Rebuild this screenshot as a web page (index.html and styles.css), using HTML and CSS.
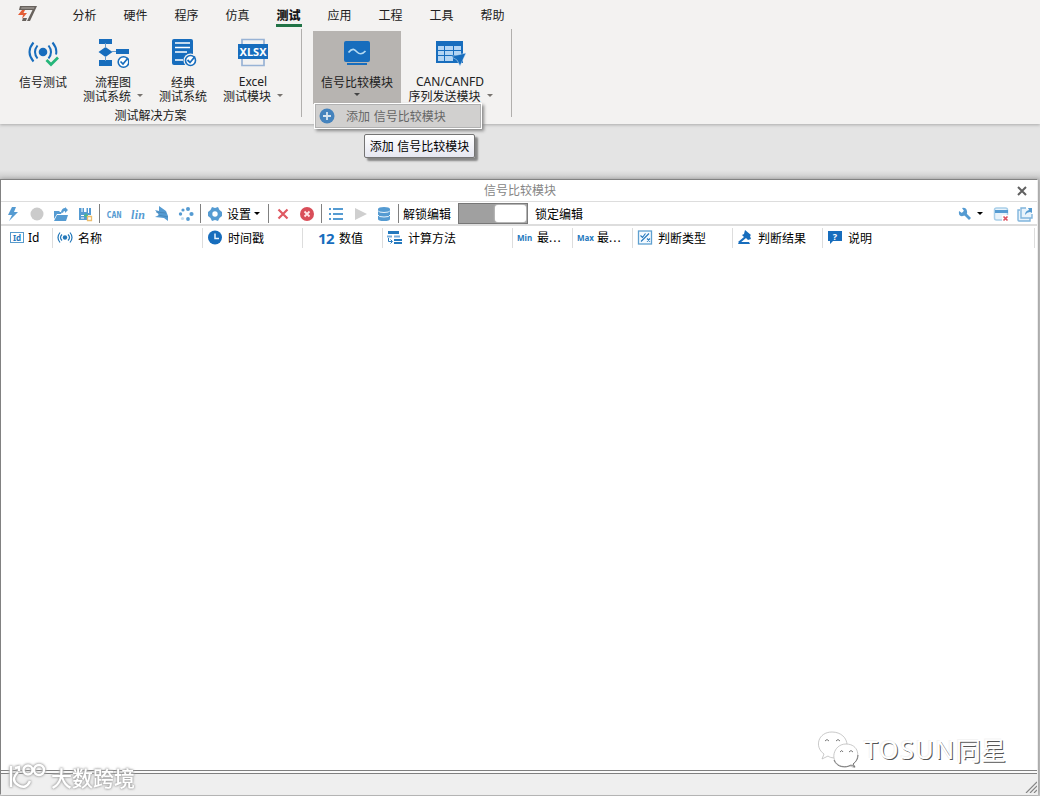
FILE: index.html
```html
<!DOCTYPE html>
<html lang="zh-CN">
<head>
<meta charset="utf-8">
<title>信号比较模块</title>
<link rel="stylesheet" href="styles.css">
</head>
<body>
<div class="app">
  <header class="ribbon">
    <nav class="tabs">
      <svg class="logo" width="20" height="18" viewBox="0 0 20 18"><path fill="#68625d" d="M2 0h17l-7 15H9l5.500-11H1z"/><path fill="#b5b0ac" d="M3.500 1.500h13l-.5 1H3z"/><path fill="#e45d36" d="M4 4h3L5.500 7H9l-5 6 1-4H0z"/><path fill="#68625d" d="M5 12h4l-1 3H4z"/></svg>
      <span class="tab">分析</span><span class="tab">硬件</span><span class="tab">程序</span><span class="tab">仿真</span><span class="tab active"><b>测试</b></span><span class="tab">应用</span><span class="tab">工程</span><span class="tab">工具</span><span class="tab">帮助</span>
    </nav>
    <div class="groups">
      <section class="group solutions">
        <div class="buttons">
          <div class="btn b1">
            <svg width="32" height="32" viewBox="0 0 32 32"><circle cx="16" cy="15" r="4.300" fill="#176dbd"/><g fill="none" stroke="#176dbd" stroke-width="2"><path d="M10.500 8.500q-5 6.500 0 13M6.500 5.500q-8 9.500 0 19M21.500 8.500q5 6.500 0 13M25.500 5.500q5 6 3.500 12"/></g><path d="M19.500 23l4.500 4.500 7-7" fill="none" stroke="#25b67a" stroke-width="2.800"/></svg>
            <span>信号测试</span>
          </div>
          <div class="btn b2">
            <svg width="32" height="32" viewBox="0 0 32 32"><g fill="#176dbd"><path d="M2 2h13v5H2zM2 23h13v6H2zM19 12h13v5H19zM8.500 10l7 5-7 5-7-5z"/></g><path d="M8.500 6v5M8.500 19v5M15 14.500h4" stroke="#669cce"/><circle cx="26.500" cy="25" r="5.300" fill="#fff" stroke="#176dbd" stroke-width="1.600"/><path d="M23.500 24.500l2.500 2.500 5-6" fill="none" stroke="#176dbd" stroke-width="1.700"/></svg>
            <span>流程图</span><span class="line">测试系统<i class="caret"></i></span>
          </div>
          <div class="btn b3">
            <svg width="32" height="32" viewBox="0 0 32 32"><path d="M7 2h17q2 0 2 2v24H7q-2 0-2-2V4q0-2 2-2z" fill="#176dbd"/><path d="M8 6h15M8 10.500h15M8 15h12M8 23h8" stroke="#fff" stroke-width="1.500"/><circle cx="23.500" cy="23.500" r="7" fill="#f2f1f0"/><circle cx="23.500" cy="23.500" r="5" fill="#fff" stroke="#176dbd" stroke-width="1.600"/><path d="M20.500 23l2.500 2.500 5-6" fill="none" stroke="#176dbd" stroke-width="1.800"/></svg>
            <span>经典</span><span>测试系统</span>
          </div>
          <div class="btn b4">
            <svg width="32" height="32" viewBox="0 0 32 32"><path d="M5 8V2.500h22V8M5 21v7.500h22V21" fill="none" stroke="#98b3d5" stroke-width="1.700"/><path d="M1 7h30v15H1z" fill="#176dbd"/><text x="16" y="18.500" text-anchor="middle" class="xlsx" textLength="27">XLSX</text></svg>
            <span class="latin">Excel</span><span class="line">测试模块<i class="caret"></i></span>
          </div>
        </div>
        <div class="group-name">测试解决方案</div>
      </section>
      <section class="group modules">
        <div class="btn compare">
          <svg width="32" height="32" viewBox="0 0 32 32"><path d="M5 4h22q2 0 2 2v17q0 2-2 2H5q-2 0-2-2V6q0-2 2-2zM6 26h20v2H6z" fill="#176dbd"/><path d="M7.500 15.500C12 10 14 13 16 15s5 3 8.500-1" fill="none" stroke="#b4daf2" stroke-width="1.700"/></svg>
          <span>信号比较模块</span><i class="caret dark"></i>
          <div class="menu"><svg width="16" height="16" viewBox="0 0 16 16"><circle cx="8" cy="8" r="7.500" fill="#4583bd"/><path d="M8 4v8M4 8h8" stroke="#d9e5ef" stroke-width="1.800"/></svg><span>添加 信号比较模块</span></div>
          <div class="tooltip">添加 信号比较模块</div>
        </div>
        <div class="btn sequence">
          <svg width="32" height="32" viewBox="0 0 32 32"><path d="M2 4h27v22H2z" fill="#176dbd"/><path d="M4 9h6v4H4zM11 9h8v4h-8zM20 9h7v4h-7zM4 14h6v4H4zM11 14h8v4h-8zM20 14h7v4h-7zM4 19h6v5H4zM11 19h8v5h-8z" fill="#b4d5f3"/><path d="M17 19.500L32 16l-6 13-3-6z" fill="#176dbd" stroke="#d9eafa" stroke-width=".5"/></svg>
          <span class="latin">CAN/CANFD</span><span class="line">序列发送模块<i class="caret"></i></span>
        </div>
      </section>
    </div>
  </header>

  <main class="window">
    <div class="titlebar"><span>信号比较模块</span><svg class="close" width="12" height="12" viewBox="0 0 12 12"><path d="M2 2l8 8M10 2l-8 8" stroke="#606060" stroke-width="2"/></svg></div>
    <div class="toolbar">
      <svg class="tool" viewBox="0 0 16 16"><path fill="#559bd2" d="M7 1h4L9 6h4L4 15l3-6H3z"/></svg>
      <svg class="tool" viewBox="0 0 16 16"><circle cx="8" cy="8" r="6.500" fill="#cbcbcb"/></svg>
      <svg class="tool" viewBox="0 0 16 16"><path fill="#559bd2" d="M1 5h5l1 1h2l-1 2H4l-3 5zM4 9h11l-2 6H1zM8 6q1-4 4-4V1l3 3-3 3V5q-2 0-2 2z"/></svg>
      <svg class="tool" viewBox="0 0 16 16"><path fill="#559bd2" d="M2 2h12v7h-4v5H2z"/><path fill="#fff" d="M4.500 2h1v4h-1zM7 2h2.500v4H7zM11 2h1v5h-1zM4 9h4v1H4zM4 11.500h3v1H4z"/><path d="M7 9.500h4M9 7.500v4" stroke="#48b98a" stroke-width="1.300"/><path d="M10.500 10.500h4v4h-4z" fill="#fff" stroke="#ecbd6b" stroke-width="1.300"/></svg>
      <i class="divider"></i>
      <svg class="tool" viewBox="0 0 16 16"><text x="0.500" y="11.500" textLength="15" lengthAdjust="spacingAndGlyphs" class="can">CAN</text></svg>
      <svg class="tool" viewBox="0 0 16 16"><text x="1" y="12.500" textLength="14" class="lin">lin</text></svg>
      <svg class="tool" viewBox="0 0 16 16"><path fill="#559bd2" d="M5 0l7 5 2 5v5l-4-3-9-1 4-2-4-5 4 1z"/><path d="M2 6l10 1M4 9l10 2" stroke="#4381b1" stroke-width=".7"/></svg>
      <svg class="tool" viewBox="0 0 16 16"><g fill="#559bd2"><circle cx="5" cy="4" r="1.600"/><circle cx="10" cy="3" r="2"/><circle cx="13.500" cy="8" r="2.100"/><circle cx="10" cy="13" r="1.900"/><circle cx="2.500" cy="8" r="1.700"/><circle cx="4.500" cy="12.500" r="1.600" opacity=".35"/></g></svg>
      <i class="divider"></i>
      <svg class="tool" viewBox="0 0 16 16"><path fill="#559bd2" d="M5 1l3 1 3-1 1.500 3L15 6v4l-2.500 2L11 15l-3-1-3 1-1.500-3L1 10V6l2.500-2z"/><circle cx="8" cy="8" r="2.700" fill="#fff"/></svg>
      <span class="tool-text">设置</span><i class="arrow setting-arrow"></i>
      <i class="divider"></i>
      <svg class="tool" viewBox="0 0 16 16"><path d="M3.500 3.500l9 9M12.500 3.500l-9 9" stroke="#df5962" stroke-width="2.200"/></svg>
      <svg class="tool" viewBox="0 0 16 16"><circle cx="8" cy="8" r="7" fill="#d94e59"/><path d="M5.500 5.500l5 5M10.500 5.500l-5 5" stroke="#ffe7e8" stroke-width="1.800"/></svg>
      <i class="divider"></i>
      <svg class="tool" viewBox="0 0 16 16"><path d="M1 3h2M5 3h10M1 8h2M5 8h10M1 13h2M5 13h10" stroke="#559bd2" stroke-width="2"/></svg>
      <svg class="tool" viewBox="0 0 16 16"><path d="M3 2l12 6-12 6z" fill="#cfcfcf"/></svg>
      <svg class="tool" viewBox="0 0 16 16"><path d="M2 3v10q0 2 6 2t6-2V3" fill="#559bd2"/><ellipse cx="8" cy="3" rx="6" ry="2" fill="#559bd2"/><path d="M2 4.500q0 2 6 2t6-2M2 9q0 2 6 2t6-2" fill="none" stroke="#e8f3fb"/></svg>
      <i class="divider"></i>
      <span class="tool-text unlock">解锁编辑</span><span class="switch"><i></i></span><span class="tool-text lock">锁定编辑</span>
      <div class="right-tools">
        <svg width="16" height="16" viewBox="0 0 16 16"><path d="M6 6l7 7" stroke="#559bd2" stroke-width="2.800"/><path d="M2 5l3 2 2-2-2-3q4-1 5 3t-4 5-4-5" fill="#559bd2"/></svg><i class="arrow"></i>
        <svg width="16" height="16" viewBox="0 0 16 16"><rect x="1.500" y="2" width="13" height="12" rx="2" fill="#e8f3fb" stroke="#a9cfe9" stroke-width="1.500"/><path d="M2 4h13v3H2z" fill="#559bd2"/><path d="M9 9h7v7H9z" fill="#fff"/><path d="M10.500 10.500l4 4M14.500 10.500l-4 4" stroke="#db5260" stroke-width="1.700"/></svg>
        <svg width="16" height="16" viewBox="0 0 16 16"><path d="M3 4H1v10q0 1 1 1h11v-3M9 2H4v10h11V8" fill="#e8f3fb" stroke="#80b5dd" stroke-width="1.400"/><path d="M8 9q0-4 4-5l-1-2h4v5l-2-1q-3 0-5 3z" fill="#559bd2"/></svg>
      </div>
    </div>
    <div class="columns">
      <div class="col"><svg width="16" height="16" viewBox="0 0 16 16"><rect x="1.500" y="2.500" width="13" height="10" fill="#fff" stroke="#589bcc"/><text x="8" y="10.500" text-anchor="middle" class="id">Id</text></svg><span class="latin">Id</span></div>
      <div class="col signal"><svg width="16" height="16" viewBox="0 0 16 16"><circle cx="8" cy="7.500" r="2.200" fill="#2277b9"/><path d="M5 4.500q-3 3 0 6M3 2.500q-4 5 0 10M11 4.500q3 3 0 6M13 2.500q4 5 0 10" fill="none" stroke="#2277b9" stroke-width="1.200"/></svg><span>名称</span></div>
      <div class="col time"><svg width="16" height="16" viewBox="0 0 16 16"><circle cx="8" cy="7.500" r="7" fill="#176dbd"/><path d="M8 3.500V8.500h4" fill="none" stroke="#e8f4ff" stroke-width="1.500"/></svg><span>时间戳</span></div>
      <div class="col value"><strong>12</strong><span>数值</span></div>
      <div class="col calc"><svg width="16" height="16" viewBox="0 0 16 16"><path fill="#2479be" d="M1 1h11v3H1z"/><path fill="#79addb" d="M0 5.500h5v2H0zM7 5.500h6v2H7z"/><path fill="#2479be" d="M7 9h8v2H7zM7 12h8v2H7z"/><path d="M1.500 8v3.500H5M3.500 9.500l2 2-2 2" fill="none" stroke="#2479be"/></svg><span>计算方法</span></div>
      <div class="col limit"><strong>Min</strong><span>最<span class="dots">...</span></span></div>
      <div class="col limit"><strong>Max</strong><span>最<span class="dots">...</span></span></div>
      <div class="col"><svg width="16" height="16" viewBox="0 0 16 16"><rect x="1.500" y="1" width="13" height="13" fill="#f4faff" stroke="#5fa0d0" stroke-width="1.300"/><path d="M4 11.500l8-8M3.500 5.500l2 2 3-4M10 8.500l3 3M13 8.500l-3 3" fill="none" stroke="#2479be" stroke-width="1.100"/></svg><span class="verdict">判断类型</span></div>
      <div class="col"><svg width="16" height="16" viewBox="0 0 16 16"><path fill="#176dbd" d="M8 0l6 5-1 1 1 3-3 1-2-2-6 5-2-1 6-5-2-2 2-1zM2 12h10l1 2H1z"/></svg><span class="verdict">判断结果</span></div>
      <div class="col"><svg width="16" height="16" viewBox="0 0 16 16"><path fill="#176dbd" d="M1 1h14v10H6l-3 3v-3H1z"/><text x="8" y="9.500" text-anchor="middle" class="question">?</text></svg><span>说明</span></div>
    </div>
    <div class="content">
      <div class="tosun">
        <svg width="42" height="38" viewBox="0 0 42 38"><g fill="#fff" stroke="#bbb" stroke-width=".8"><path d="M7 24C-3 17 1 2 15 2c9 0 15 6 15 13 0 10-13 16-19 11l-6 3z"/><path d="M36 34c8-6 6-20-7-20s-17 18-5 22q5 2 9 0l5 2z"/></g><g fill="#fff" stroke="#777"><path d="M8 11q2-3 4 0M19 11q2-3 4 0M23 22q2-3 3 0M32 22q2-3 4 0"/></g><path d="M17 30c3 8 12 8 17 5l4 2-2-3c3-2 5-5 5-9" fill="none" stroke="#777"/></svg>
        <span class="brand">TOSUN</span><span class="star">同星</span>
      </div>
    </div>
    <footer class="status">
      <svg class="grip" width="12" height="12" viewBox="0 0 12 12"><path d="M1 12L12 1M5 12l7-7M9 12l3-3" stroke="#858585" stroke-width="1.200"/></svg>
      <div class="watermark"><svg width="38" height="28" viewBox="0 0 38 28"><g fill="none" stroke="#fff" stroke-width="2.400"><path d="M3 3v21M10 9q-8 8 0 13t12-4M7 5l4-1v4"/><circle cx="20" cy="7" r="4.500"/><circle cx="31" cy="7" r="5"/></g></svg><span>大数跨境</span></div>
    </footer>
  </main>
</div>
</body>
</html>
```
FILE: styles.css
```css
* { box-sizing: border-box; }
body { margin: 0; background: #e1e1e1; color: #202020; font: 12px/16px "Noto Sans CJK SC", sans-serif; }
svg { display: block; flex: none; }
i { display: block; font-style: normal; }
.app { width: 1040px; height: 796px; overflow: hidden; display: flex; flex-direction: column; background: linear-gradient(#e4e4e4 0 170px, #c8c8c8 180px); }
.ribbon { height: 124px; flex: none; background: #f3f2f1; box-shadow: 0 1px 3px #aaa; position: relative; z-index: 2; }
.tabs { height: 29px; display: grid; grid-template-columns: 59px repeat(9, 51px); }
.logo { margin: 6px 0 0 18px; }
.tab { padding-top: 7px; display: flex; justify-content: center; align-items: flex-start; }
.active b { font-weight: 900; border-bottom: 3px solid #217346; height: 20px; width: 26px; text-align: center; color: #171717; }
.groups { display: flex; height: 88px; }
.group { border-right: 1px solid #b1afad; }
.solutions { width: 302px; }
.buttons { display: flex; height: 78px; padding-left: 8px; }
.btn { display: flex; flex-direction: column; align-items: center; position: relative; width: 70px; padding-top: 8px; line-height: 14px; white-space: nowrap; }
.btn > svg { margin-bottom: 6px; }
.latin { font-family: "Noto Sans", sans-serif; }
.b2 .line, .b4 .line { margin-left: -12px; }
.line { position: relative; }
.caret { width: 0; height: 0; border: 3px solid transparent; border-top-color: #77736f; border-bottom: 0; }
.line .caret { position: absolute; right: -12px; top: 5px; }
.group-name { text-align: center; line-height: 16px; }
.modules { width: 210px; padding: 2px 0 0 11px; display: flex; }
.compare { width: 88px; height: 73px; background: #b7b4b1; padding-top: 6px; }
.dark { margin-top: 4px; border-top-color: #444; }
.sequence { width: 98px; padding-top: 6px; }
.sequence .line { margin-left: -11px; }
.menu { position: absolute; left: 1px; top: 72px; width: 168px; height: 26px; display: flex; align-items: center; padding-left: 4px; gap: 11px; border: 1px solid #fff; outline: 1px solid #b1b1b1; outline-offset: -2px; background: #d1d0cf; color: #666; box-shadow: 2px 2px 3px #888; word-spacing: 1px; }
.btn .menu svg { margin: 0; }
.tooltip { position: absolute; left: 51px; top: 103px; width: 111px; height: 24px; text-align: center; line-height: 22px; color: #000; word-spacing: 1px; border: 1px solid #747474; border-radius: 2px; background: linear-gradient(#fff,#e6e7f1); box-shadow: 3px 3px 2px #858585; z-index: 3; }
.window { width: 1038px; height: 616px; margin-top: 55px; display: flex; flex-direction: column; border: 1px solid #818181; border-right-color: #eee; border-bottom-color: #eee; background: #fff; box-shadow: 1px 0 4px #999; }
.titlebar { height: 22px; flex: none; display: grid; grid-template-columns: 1fr auto 1fr; align-items: center; color: #858585; border-bottom: 1px solid #ddd; line-height: 19px; padding: 0 0 2px 2px; }
.titlebar span { grid-column: 2; }
.close { justify-self: end; margin: 2px 9px 0 0; }
.toolbar { height: 24px; flex: none; display: flex; align-items: center; border-bottom: 2px solid #ddd; color: #000; padding-top: 1px; }
.tool { width: 24px; height: 16px; }
.divider { width: 1px; height: 19px; margin: 0 2px; flex: none; background: #808080; }
.tool-text { flex: none; line-height: 20px; }
.arrow { border: 3px solid transparent; border-top-color: #000; border-bottom: 0; width: 0; height: 0; }
.setting-arrow { margin: 0 6px 0 3px; }
.unlock { margin-left: 2px; }
.switch { height: 21px; width: 70px; flex: none; margin: 0 7px; padding: 1px 1px 1px 36px; background: #a0a0a0; border: 1px solid #777; }
.switch i { width: 31px; height: 17px; border-radius: 3px; background: #fff; box-shadow: 0 0 2px #eee; }
.right-tools { margin-left: auto; display: flex; align-items: center; padding-right: 4px; gap: 8px; }
.right-tools .arrow { margin: 0 2px 0 -4px; }
.columns { height: 23px; flex: none; display: grid; grid-template-columns: 52px 150px 100px 80px 130px 60px 60px 100px 90px 212px 1fr; color: #000; align-items: center; }
.col { height: 20px; border-right: 1px solid #ddd; display: flex; align-items: center; padding-left: 4px; gap: 5px; white-space: nowrap; overflow: hidden; }
.col:first-child { padding-left: 8px; gap: 3px; }
.value { padding-left: 15px; gap: 5px; }
.value strong { color: #176dbd; font: bold 15px/18px "Open Sans", sans-serif; width: 16px; letter-spacing: -.7px; }
.limit { padding-left: 4px; gap: 4px; }
.limit strong { width: 16px; color: #2479be; font: bold 8px/16px "Noto Sans", sans-serif; }
.dots { font-family: "Noto Sans", sans-serif; letter-spacing: 1px; }
.xlsx { fill: #fff; font: bold 11px "Noto Sans", sans-serif; }
.can { fill: #559bd2; font: bold 9px "DejaVu Sans Mono", monospace; }
.lin { fill: #559bd2; font: italic bold 12px "Liberation Serif", serif; }
.id { fill: #2479be; font: bold 8px "Noto Sans", sans-serif; }
.question { fill: #fff; font: bold 9px "Noto Sans", sans-serif; }
.content { flex: 1; min-height: 0; display: flex; align-items: flex-end; justify-content: flex-end; padding: 0 31px 2px 0; }
.tosun { display: flex; align-items: center; color: #fff; font: 25px/34px "Noto Sans", sans-serif; text-shadow: 1px 1px 0 #555, -1px -1px 0 #f4f4f4; }
.tosun svg { margin-right: 5px; }
.brand { letter-spacing: 1.6px; }
.star { font: 25px/34px "Noto Sans CJK SC", sans-serif; }
.status { height: 24px; flex: none; border-top: 1px solid #808080; background: #efefef; box-shadow: inset 0 2px #fafafa, inset 0 3px #808080; display: flex; justify-content: flex-end; align-items: flex-end; position: relative; padding-bottom: 1px; }
.watermark { position: absolute; left: 7px; top: -9px; display: flex; align-items: center; gap: 5px; color: #fff; font: 500 21px/30px "Noto Sans CJK SC", sans-serif; filter: drop-shadow(0 0 1px #999) drop-shadow(0 0 1px #bbb); }
```
